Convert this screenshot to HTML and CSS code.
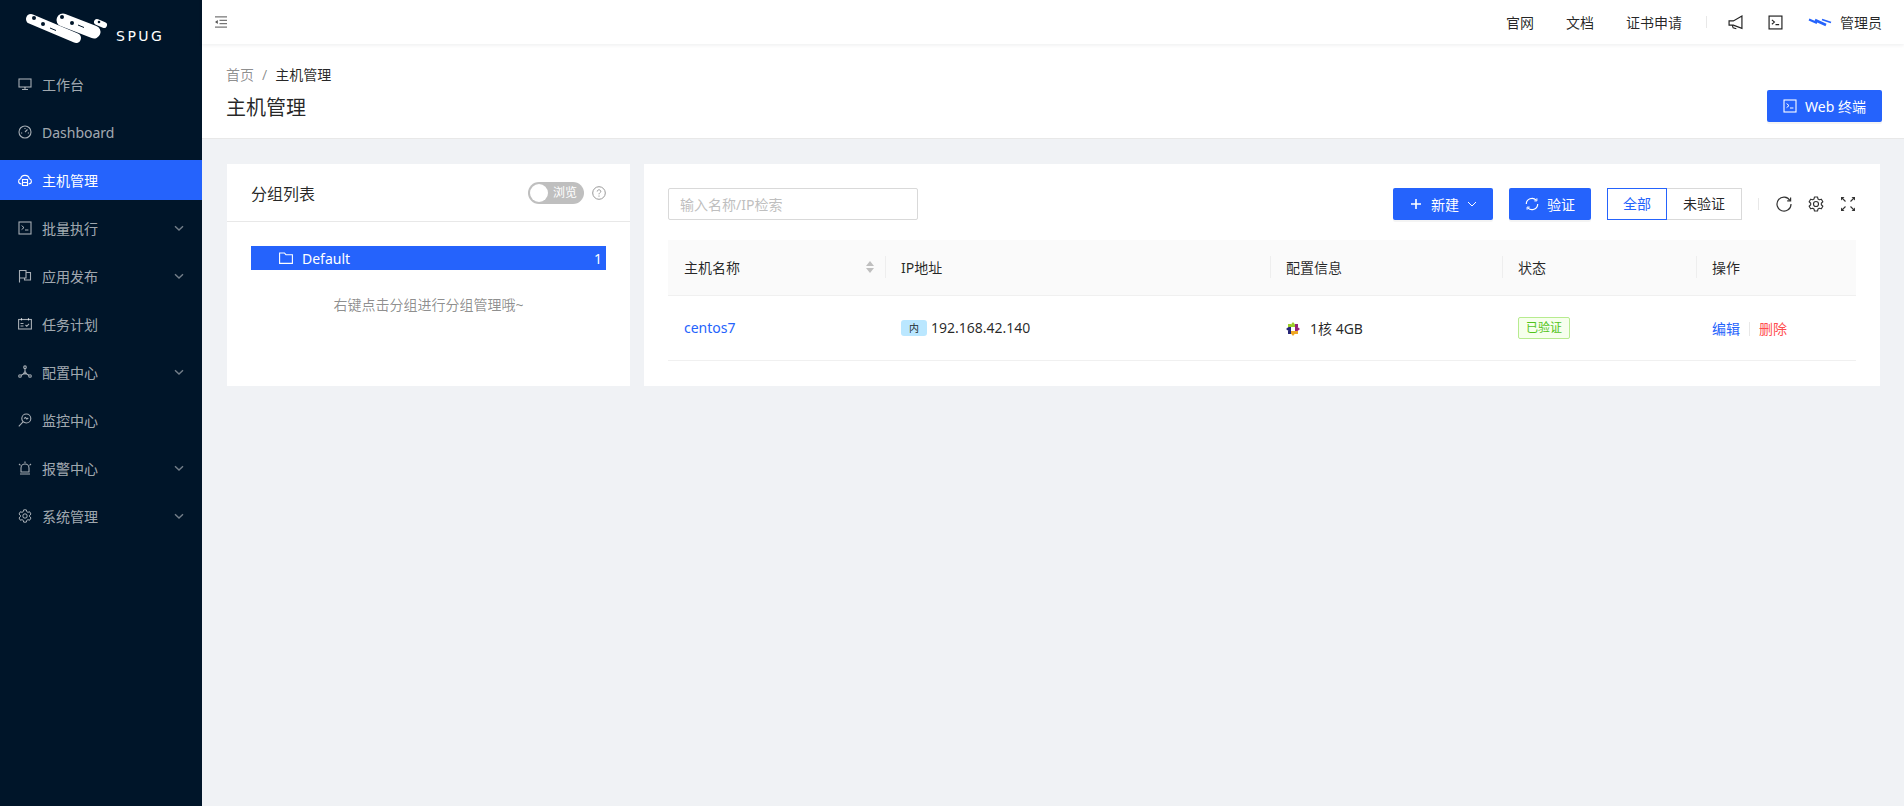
FILE: index.html
```html
<!DOCTYPE html>
<html lang="zh-CN">
<head>
  <meta charset="UTF-8" />
  <meta name="viewport" content="width=device-width, initial-scale=1.0"/>
  <title>主机管理</title>
  <link rel="stylesheet" href="styles.css">
</head>
<body>

<svg class="defs" width="0" height="0">
  <symbol id="i-code" viewBox="0 0 14 14">
    <rect x="1" y="1" width="12" height="12" fill="none" stroke="currentColor" stroke-width="1.1"/>
    <path d="M3.6 4.6 6 6.6 3.6 8.6M7 9h3.4" fill="none" stroke="currentColor" stroke-width="1"/>
  </symbol>
  <symbol id="i-gear" viewBox="0 0 14 14">
    <path d="M5.24 2.64 5.69.84h2.62l.45 1.8L9.9 3.3l1.78-.51 1.31 2.26-1.34 1.3v1.3l1.34 1.3-1.31 2.26-1.78-.51-1.14.66-.45 1.8H5.69l-.45-1.8-1.14-.66-1.78.51-1.31-2.26 1.34-1.3v-1.3l-1.34-1.3 1.31-2.26 1.78.51z" fill="none" stroke="currentColor" stroke-width="1" stroke-linejoin="round"/>
    <circle cx="7" cy="7" r="2.2" fill="none" stroke="currentColor" stroke-width="1"/>
  </symbol>
  <symbol id="i-down" viewBox="0 0 10 10">
    <path d="M1 3.2 5 7l4-3.8" fill="none" stroke="currentColor" stroke-width="1.4"/>
  </symbol>
</svg>

<div class="layout">
  <aside class="sidebar">
    <div class="logo">
      <svg class="logo-mark" width="90" height="46" viewBox="20 6 90 46">
        <path d="M31 19 76 38" stroke="#fff" stroke-width="10" stroke-linecap="round"/>
        <path d="M63 20 94 32" stroke="#fff" stroke-width="13" stroke-linecap="round"/>
        <path d="M97 22l7 3" stroke="#fff" stroke-width="6" stroke-linecap="round"/>
        <circle cx="34" cy="18" r="2" fill="#001529"/>
        <circle cx="43" cy="24" r="2" fill="#001529"/>
        <path d="M50 28l6 2.500" stroke="#001529"/>
        <circle cx="62" cy="17" r="2" fill="#001529"/>
        <circle cx="72" cy="23" r="2" fill="#001529"/>
        <path d="M78 25l6 2.500" stroke="#001529"/>
        <circle cx="99" cy="22" r="1.300" fill="#001529"/>
      </svg>
      <span class="logo-text">SPUG</span>
    </div>
    <ul class="menu">
      <li class="menu-item">
        <svg class="menu-icon" viewBox="0 0 14 14" fill="none" stroke="currentColor" stroke-width="1.100"><rect x="1" y="2" width="12" height="8"/><path d="M7 10v2.500M4 12.500h6"/></svg>
        <span>工作台</span>
      </li>
      <li class="menu-item">
        <svg class="menu-icon" viewBox="0 0 14 14" fill="none" stroke="currentColor" stroke-width="1.100"><circle cx="7" cy="7" r="6"/><path d="M7 7 9.500 4.500M3 8h1.200M9.800 8H11M7 3v1"/></svg>
        <span>Dashboard</span>
      </li>
      <li class="menu-item active">
        <svg class="menu-icon" viewBox="0 0 14 14" fill="none" stroke="currentColor" stroke-width="1.100"><path d="M3.500 11C1.800 11 .6 9.800.6 8.300.6 7 1.600 6 2.700 5.800 3 3.700 4.800 2.400 7 2.400s4 1.300 4.300 3.400C12.400 6 13.400 7 13.400 8.300 13.400 9.800 12.200 11 10.500 11"/><rect x="4.500" y="6.500" width="5" height="6"/><path d="M4.500 9.500h5"/></svg>
        <span>主机管理</span>
      </li>
      <li class="menu-item">
        <svg class="menu-icon"><use href="#i-code"/></svg>
        <span>批量执行</span>
        <svg class="menu-arrow"><use href="#i-down"/></svg>
      </li>
      <li class="menu-item">
        <svg class="menu-icon" viewBox="0 0 14 14" fill="none" stroke="currentColor" stroke-width="1.100"><path d="M1.500 13.500V1.500h6.500v7.500H1.500M8 3.500h4.500v7.500H6.500V9"/></svg>
        <span>应用发布</span>
        <svg class="menu-arrow"><use href="#i-down"/></svg>
      </li>
      <li class="menu-item">
        <svg class="menu-icon" viewBox="0 0 14 14" fill="none" stroke="currentColor" stroke-width="1.100"><rect x=".6" y="2.500" width="12.800" height="9.500"/><path d="M3.500 1v2.500M10.500 1v2.500M2.500 6.500h3M2.500 9h3M7.500 8l1.300 1.300 2.200-2.500"/></svg>
        <span>任务计划</span>
      </li>
      <li class="menu-item">
        <svg class="menu-icon" viewBox="0 0 14 14" fill="none" stroke="currentColor" stroke-width="1.100"><circle cx="7" cy="2.200" r="1.300"/><circle cx="2" cy="11" r="1.300"/><circle cx="12" cy="11" r="1.300"/><circle cx="7" cy="8" r="1"/><path d="M7 3.500V7M3.200 10.300 6.200 8.600M10.800 10.300 7.800 8.600"/></svg>
        <span>配置中心</span>
        <svg class="menu-arrow"><use href="#i-down"/></svg>
      </li>
      <li class="menu-item">
        <svg class="menu-icon" viewBox="0 0 14 14" fill="none" stroke="currentColor" stroke-width="1.100"><circle cx="8.300" cy="5.500" r="4.500"/><path d="M5 8.800.8 13.300M6 5.500l1.500-1 1.300 1.500 1.500-1"/></svg>
        <span>监控中心</span>
      </li>
      <li class="menu-item">
        <svg class="menu-icon" viewBox="0 0 14 14" fill="none" stroke="currentColor" stroke-width="1.100"><path d="M3 11V7a4 4 0 0 1 8 0v4zM2 13h10M1 3l1.500 1.300M13 3l-1.500 1.300M7 .6V2"/></svg>
        <span>报警中心</span>
        <svg class="menu-arrow"><use href="#i-down"/></svg>
      </li>
      <li class="menu-item">
        <svg class="menu-icon"><use href="#i-gear"/></svg>
        <span>系统管理</span>
        <svg class="menu-arrow"><use href="#i-down"/></svg>
      </li>
    </ul>
  </aside>

  <div class="main">
    <header class="topbar">
      <svg class="fold-icon" viewBox="0 0 12 12" fill="none" stroke="#555" stroke-width="1"><path d="M0 .9h12M4.500 4.300H12M4.500 7.700H12M0 11.100h12"/><path d="M2.800 4v4L0 6z" fill="#555" stroke="none"/></svg>
      <div class="topbar-right">
        <a class="top-link">官网</a>
        <a class="top-link">文档</a>
        <a class="top-link">证书申请</a>
        <span class="top-sep"></span>
        <svg class="top-icon" viewBox="0 0 14 14" fill="none" stroke="#222" stroke-width="1.100"><path d="M13 1v11.500L5 9.500H1V5.500h4z"/><path d="M4 9.500l.8 2.500 3 .8"/></svg>
        <svg class="top-icon term"><use href="#i-code"/></svg>
        <svg class="top-avatar" viewBox="0 0 24 10" fill="none" stroke="#2563fc"><path d="M1 2.500 9 6" stroke-width="2"/><path d="M7 3 18 8" stroke-width="2.500"/><path d="M14 2.500 23 5.500" stroke-width="1.800"/></svg>
        <span class="top-user">管理员</span>
      </div>
    </header>

    <section class="page-head">
      <div>
        <div class="crumbs">
          <span class="crumb-link">首页</span>
          <span class="crumb-sep">/</span>
          <span>主机管理</span>
        </div>
        <h1 class="page-title">主机管理</h1>
      </div>
      <button class="btn web-btn">
        <svg class="btn-icon"><use href="#i-code"/></svg>
        Web 终端
      </button>
    </section>

    <div class="content">
      <div class="card group-card">
        <div class="group-head">
          <span class="group-title">分组列表</span>
          <span class="switch"><i class="knob"></i><em>浏览</em></span>
          <svg class="help" viewBox="0 0 14 14" fill="none" stroke="#999" stroke-width="1"><circle cx="7" cy="7" r="6.300"/><path d="M5.200 5.500c0-1 .8-1.700 1.800-1.700s1.800.7 1.800 1.600c0 1.300-1.800 1.300-1.800 2.900"/><path d="M7 9.500v1.200"/></svg>
        </div>
        <div class="group-body">
          <div class="tree-row">
            <svg class="tree-folder" viewBox="0 0 14 12" fill="none" stroke="#fff" stroke-width="1.100"><path d="M.6 1h4.800l1.500 1.700h6.500v8.700H.6z"/></svg>
            <span class="tree-name">Default</span>
            <span class="tree-count">1</span>
          </div>
          <p class="tree-hint">右键点击分组进行分组管理哦~</p>
        </div>
      </div>

      <div class="card host-card">
        <div class="toolbar">
          <input class="search" type="text" placeholder="输入名称/IP检索">
          <div class="actions">
            <button class="btn">
              <svg class="btn-icon" viewBox="0 0 14 14" fill="none" stroke="#fff" stroke-width="1.600"><path d="M7 2v10M2 7h10"/></svg>
              新建
              <svg class="btn-down" viewBox="0 0 10 10" fill="none" stroke="#fff"><path d="M1 3l4 4 4-4"/></svg>
            </button>
            <button class="btn">
              <svg class="btn-icon" viewBox="0 0 14 14" fill="none" stroke="#fff" stroke-width="1.200"><path d="M1.300 7a5.700 5.700 0 0 1 9.900-3.800M12.700 7a5.700 5.700 0 0 1-9.900 3.800"/><path d="M11.900 1.300v2.600H9.300M2.100 12.700v-2.600h2.600" stroke-width="1"/></svg>
              验证
            </button>
            <div class="radio">
              <span class="radio-item on">全部</span>
              <span class="radio-item">未验证</span>
            </div>
            <span class="tool-sep"></span>
            <div class="tools">
              <svg class="tool" viewBox="0 0 16 16" fill="none" stroke="#333" stroke-width="1.200"><path d="M14 4.500A7 7 0 1 0 15 8"/><path d="M14.600 1.500v3.400h-3.400" fill="none"/></svg>
              <svg class="tool"><use href="#i-gear"/></svg>
              <svg class="tool" viewBox="0 0 16 16" fill="#333" stroke="#333"><path d="M5.500 5.500 2 2M10.500 5.500 14 2M5.500 10.500 2 14M10.500 10.500 14 14" fill="none" stroke-width="1.100"/><path d="M1 1h3.500L1 4.500zM15 1h-3.500L15 4.500zM1 15h3.500L1 11.500zM15 15h-3.500l3.500-3.500z" stroke="none"/></svg>
            </div>
          </div>
        </div>

        <table class="hosts">
          <colgroup>
            <col class="col-name"><col class="col-ip"><col class="col-info"><col class="col-state"><col>
          </colgroup>
          <thead>
            <tr>
              <th>主机名称
                <svg class="sorter" viewBox="0 0 8 12" fill="#bfbfbf"><path d="M4 0 8 5H0zM4 12 0 7h8z"/></svg>
              </th>
              <th>IP地址</th>
              <th>配置信息</th>
              <th>状态</th>
              <th>操作</th>
            </tr>
          </thead>
          <tbody>
            <tr>
              <td><a class="link">centos7</a></td>
              <td><span class="ip-tag">内</span>192.168.42.140</td>
              <td>
                <svg class="os-icon" viewBox="0 0 14 14">
                  <path d="M7 0 9 2.500V5H5V2.500z" fill="#9ccd2a"/>
                  <path d="M14 7 11.500 9H9V5h2.500z" fill="#932279"/>
                  <path d="M7 14 5 11.500V9h4v2.500z" fill="#efa724"/>
                  <path d="M0 7 2.500 5H5v4H2.500z" fill="#262577"/>
                  <rect x="2" y="2" width="3" height="3" fill="#9ccd2a"/>
                  <rect x="9" y="2" width="3" height="3" fill="#932279"/>
                  <rect x="9" y="9" width="3" height="3" fill="#efa724"/>
                  <rect x="2" y="9" width="3" height="3" fill="#262577"/>
                </svg>1核 4GB
              </td>
              <td><span class="state-tag">已验证</span></td>
              <td>
                <a class="link">编辑</a><span class="op-sep"></span><a class="link danger">删除</a>
              </td>
            </tr>
          </tbody>
        </table>
      </div>
    </div>
  </div>
</div>

</body>
</html>
```

FILE: styles.css
```css
* {
  box-sizing: border-box;
}
html, body {
  height: 100%;
}
body {
  margin: 0;
  font-family: "Noto Sans", "Noto Sans CJK SC", sans-serif;
  font-size: 14px;
  color: rgba(0,0,0,0.85);
  background-color: #f0f2f5;
  overflow: hidden;
}
.defs {
  position: absolute;
}
.layout {
  display: flex;
  height: 100%;
}

/* sidebar */
.sidebar {
  flex: 0 0 202px;
  background-color: #001529;
}
.logo {
  display: flex;
  height: 60px;
  padding: 6px 0 0 20px;
}
.logo-text {
  margin: 21px 0 0 6px;
  height: 18px;
  font-family: "DejaVu Sans", sans-serif;
  font-size: 14px;
  line-height: 18px;
  letter-spacing: 2.500px;
  color: #fff;
}
.logo-mark {
  flex: none;
  width: 90px;
  height: 46px;
}
.menu {
  list-style: none;
  margin: 4px 0 0;
  padding: 0;
}
.menu-item {
  display: flex;
  align-items: center;
  height: 40px;
  margin-bottom: 8px;
  padding-left: 18px;
  color: rgba(255,255,255,0.65);
}
.menu-item.active {
  background-color: #2563fc;
  color: #fff;
}
.menu-icon {
  flex: none;
  width: 14px;
  height: 14px;
  margin-right: 10px;
}
.menu-arrow {
  width: 10px;
  height: 10px;
  margin-left: auto;
  margin-right: 18px;
  color: rgba(255,255,255,0.45);
}

/* top */
.main {
  flex: 1;
  min-width: 0;
}
.topbar {
  position: relative;
  display: flex;
  align-items: center;
  justify-content: space-between;
  height: 44px;
  padding: 0 22px 0 13px;
  background: white;
  box-shadow: 0 1px 4px rgba(0,21,41,0.08);
}
.fold-icon {
  width: 12px;
  height: 12px;
}
.topbar-right {
  display: flex;
  align-items: center;
}
.top-link {
  margin-right: 32px;
}
.top-link:nth-child(3) {
  margin-right: 24px;
}
.top-sep {
  width: 1px;
  height: 12px;
  margin-right: 21px;
  background-color: #e8e8e8;
}
.top-icon {
  width: 15px;
  height: 15px;
  margin-right: 25px;
}
.top-icon.term {
  color: #222;
}
.top-avatar {
  width: 24px;
  height: 10px;
  margin-right: 8px;
}
.page-head {
  display: flex;
  justify-content: space-between;
  align-items: flex-end;
  height: 95px;
  padding: 16px 22px 16px 24px;
  background: white;
  border-bottom: 1px solid #e8e8e8;
}
.crumbs {
  display: flex;
  line-height: 22px;
}
.crumb-link {
  color: rgba(0,0,0,0.45);
}
.crumb-sep {
  margin: 0 8px;
  color: rgba(0,0,0,0.45);
}
.page-title {
  margin: 8px 0 0;
  font-size: 20px;
  font-weight: 400;
  line-height: 28px;
}

/* buttons */
.btn {
  display: flex;
  align-items: center;
  gap: 8px;
  height: 32px;
  padding: 0 16px;
  background-color: #2563fc;
  border: none;
  border-radius: 2px;
  color: white;
  font-family: inherit;
  font-size: 14px;
  box-shadow: 0 2px 0 rgba(0,0,0,0.045);
}
.btn-icon {
  width: 14px;
  height: 14px;
}
.btn-down {
  width: 10px;
  height: 10px;
}

/* cards */
.content {
  display: grid;
  grid-template-columns: 403px 1fr;
  gap: 14px;
  padding: 25px 24px 0 25px;
}
.card {
  background: white;
}
.group-head {
  display: flex;
  align-items: center;
  height: 58px;
  padding: 0 24px;
  border-bottom: 1px solid #e8e8e8;
}
.group-title {
  font-size: 16px;
  margin-right: auto;
}
.switch {
  position: relative;
  width: 56px;
  height: 22px;
  border-radius: 11px;
  background-color: #bfbfbf;
  color: white;
  font-size: 12px;
  line-height: 22px;
  text-align: right;
  padding-right: 7px;
}
.switch em {
  font-style: normal;
}
.knob {
  position: absolute;
  left: 2px;
  top: 2px;
  width: 18px;
  height: 18px;
  border-radius: 50%;
  background: white;
}
.help {
  width: 14px;
  height: 14px;
  margin-left: 8px;
}
.group-body {
  padding: 24px;
}
.tree-row {
  display: flex;
  align-items: center;
  height: 24px;
  padding: 0 4px 0 28px;
  background-color: #2563fc;
  color: white;
}
.tree-folder {
  width: 14px;
  height: 12px;
  margin-right: 9px;
}
.tree-count {
  margin-left: auto;
}
.tree-hint {
  margin: 24px 0 0;
  line-height: 22px;
  text-align: center;
  color: rgba(0,0,0,0.45);
}
.host-card {
  padding: 24px 24px 25px;
}
.toolbar {
  display: flex;
  justify-content: space-between;
  margin-bottom: 20px;
}
.search {
  width: 250px;
  height: 32px;
  padding: 0 11px;
  border: 1px solid #d9d9d9;
  border-radius: 2px;
  font-family: inherit;
  font-size: 14px;
}
.search::placeholder {
  color: #bfbfbf;
}
.actions {
  display: flex;
  align-items: center;
  gap: 16px;
}
.radio {
  display: flex;
}
.radio-item {
  height: 32px;
  padding: 0 15px;
  border: 1px solid #d9d9d9;
  line-height: 30px;
}
.radio-item + .radio-item {
  border-left: 0;
  padding: 0 16px;
}
.radio-item.on {
  border-color: #2563fc;
  color: #2563fc;
}
.tool-sep {
  width: 1px;
  height: 12px;
  background-color: #e8e8e8;
}
.tools {
  display: flex;
  gap: 16px;
  padding: 0 0 0 0;
  margin-left: 1px;
}
.tool {
  width: 16px;
  height: 16px;
  color: #333;
}

/* table */
.hosts {
  width: 100%;
  table-layout: fixed;
  border-collapse: collapse;
}
.col-name { width: 217px; }
.col-ip { width: 385px; }
.col-info { width: 232px; }
.col-state { width: 194px; }
.hosts th {
  position: relative;
  height: 55px;
  padding: 0 16px;
  background-color: #fafafa;
  border-bottom: 1px solid #f0f0f0;
  font-weight: 400;
  text-align: left;
}
.hosts th + th::before {
  content: "";
  position: absolute;
  left: 0;
  top: 16px;
  width: 1px;
  height: 22px;
  background-color: #eeeeee;
}
.sorter {
  position: absolute;
  right: 11px;
  top: 21px;
  width: 8px;
  height: 12px;
}
.hosts td {
  height: 65px;
  padding: 0 16px;
  border-bottom: 1px solid #f0f0f0;
}
.link {
  color: #2563fc;
}
.link.danger {
  color: #ff4d4f;
}
.ip-tag {
  display: inline-block;
  width: 26px;
  height: 16px;
  margin-right: 4px;
  background-color: #bae7ff;
  border-radius: 3px;
  font-size: 10px;
  line-height: 16px;
  text-align: center;
  vertical-align: 1px;
}
.os-icon {
  width: 14px;
  height: 14px;
  margin-right: 10px;
  vertical-align: -2px;
}
.state-tag {
  display: inline-block;
  height: 22px;
  padding: 0 7px;
  background-color: #f6ffed;
  border: 1px solid #b7eb8f;
  border-radius: 2px;
  color: #52c41a;
  font-size: 12px;
  line-height: 20px;
}
.op-sep {
  display: inline-block;
  width: 1px;
  height: 14px;
  margin: 0 9px;
  background-color: #e8e8e8;
  vertical-align: -2px;
}
```
